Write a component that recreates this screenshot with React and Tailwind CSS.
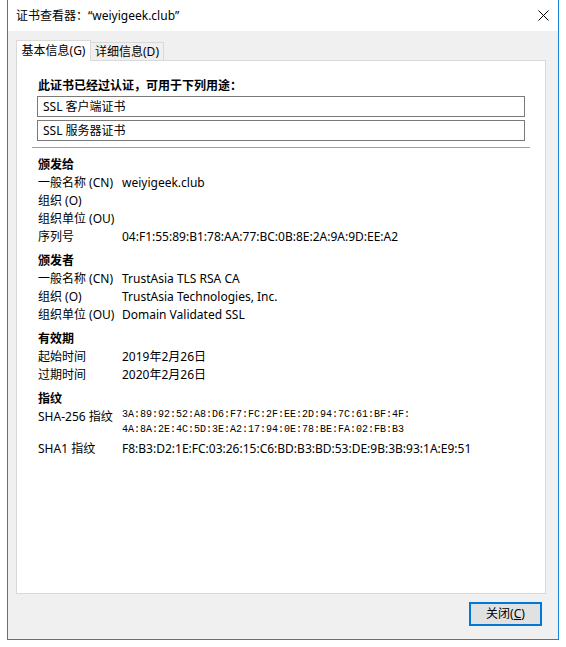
import React from "react";

const F = { fontFamily: '"Noto Sans", "Noto Sans CJK SC", sans-serif' };

function Row({ label, value }) {
  return (
    <div className="flex h-[18px] leading-[18px]">
      <div className="w-[84px] shrink-0 whitespace-nowrap">{label}</div>
      <div className="whitespace-nowrap">{value}</div>
    </div>
  );
}

function Heading({ children, className = "" }) {
  return <div className={"h-[18px] leading-[18px] font-bold " + className}>{children}</div>;
}

export default function App() {
  return (
    <div className="w-[566px] h-[647px] bg-white text-[12px] text-black" style={F}>
      <div className="ml-[7px] w-[552px] h-[640px] border-l border-r border-b border-[#1883d7] flex flex-col">
        {/* title bar */}
        <div className="h-[31px] shrink-0 bg-white flex items-center pl-[8px]">
          <span className="leading-[18px]">证书查看器：“weiyigeek.club”</span>
          <svg className="ml-auto mr-[9px]" width="11" height="11" viewBox="0 0 11 11">
            <path d="M0.5 0.5 L10.5 10.5 M10.5 0.5 L0.5 10.5" stroke="#000" strokeWidth="1" fill="none" />
          </svg>
        </div>
        {/* body */}
        <div className="flex-1 bg-[#f0f0f0] pl-[8px] pt-[9px] flex flex-col">
          <div className="w-[530px] flex flex-col">
            {/* tabs */}
            <div className="flex items-end h-[20px]">
              <div className="relative z-10 h-[21px] -mb-[1px] w-[75px] bg-white border-t border-l border-r border-[#d9d9d9] flex items-center justify-center leading-[18px] pb-[1px]">
                基本信息(G)
              </div>
              <div className="h-[18px] w-[73px] border-t border-r border-[#d9d9d9] bg-[#f0f0f0] flex items-center justify-center leading-[18px]">
                详细信息(D)
              </div>
            </div>
            {/* panel */}
            <div className="h-[534px] bg-white border border-[#d9d9d9] pl-[21px] pt-[16px] flex flex-col">
              <Heading>此证书已经过认证，可用于下列用途：</Heading>
              <div className="mt-[1px] -ml-[1px] w-[488px] h-[21px] border border-[#7a7a7a] pl-[5px] flex items-center leading-[18px]">
                SSL 客户端证书
              </div>
              <div className="mt-[3px] -ml-[1px] w-[488px] h-[21px] border border-[#7a7a7a] pl-[5px] flex items-center leading-[18px]">
                SSL 服务器证书
              </div>
              <div className="mt-[6px] -ml-[6px] w-[498px] h-px bg-[#a0a0a0]" />

              <Heading className="mt-[8px]">颁发给</Heading>
              <Row label="一般名称 (CN)" value="weiyigeek.club" />
              <Row label="组织 (O)" value="" />
              <Row label="组织单位 (OU)" value="" />
              <Row label="序列号" value="04:F1:55:89:B1:78:AA:77:BC:0B:8E:2A:9A:9D:EE:A2" />

              <Heading className="mt-[6px]">颁发者</Heading>
              <Row label="一般名称 (CN)" value="TrustAsia TLS RSA CA" />
              <Row label="组织 (O)" value="TrustAsia Technologies, Inc." />
              <Row label="组织单位 (OU)" value="Domain Validated SSL" />

              <Heading className="mt-[6px]">有效期</Heading>
              <Row label="起始时间" value="2019年2月26日" />
              <Row label="过期时间" value="2020年2月26日" />

              <Heading className="mt-[6px]">指纹</Heading>
              <div className="flex">
                <div className="w-[84px] shrink-0 h-[18px] leading-[18px] whitespace-nowrap">SHA-256 指纹</div>
                <div
                  className="-mt-[1px] text-[10px] leading-[15px] whitespace-nowrap"
                  style={{ fontFamily: '"Liberation Mono", monospace' }}
                >
                  <div>3A:89:92:52:A8:D6:F7:FC:2F:EE:2D:94:7C:61:BF:4F:</div>
                  <div>4A:8A:2E:4C:5D:3E:A2:17:94:0E:78:BE:FA:02:FB:B3</div>
                </div>
              </div>
              <div className="mt-[3px]">
                <Row label="SHA1 指纹" value="F8:B3:D2:1E:FC:03:26:15:C6:BD:B3:BD:53:DE:9B:3B:93:1A:E9:51" />
              </div>
            </div>
            {/* button */}
            <div className="flex justify-end pr-[4px] mt-[8px]">
              <div className="w-[73px] h-[24px] border-2 border-[#0078d7] bg-[#e1e1e1] flex items-center justify-center leading-[18px]">
                关闭(<span className="underline">C</span>)
              </div>
            </div>
          </div>
        </div>
      </div>
    </div>
  );
}
